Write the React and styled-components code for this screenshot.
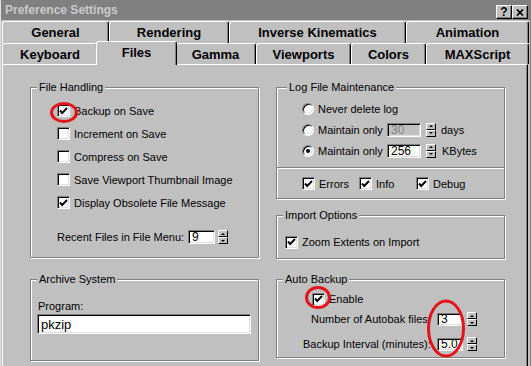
import React from 'react';
import styled, { createGlobalStyle } from 'styled-components';

const GlobalStyle = createGlobalStyle`
  html, body {
    margin: 0;
    padding: 0;
    background: #c0c0c0;
  }
  body {
    font-family: "Liberation Sans", Arial, sans-serif;
    font-size: 11px;
    color: #000;
  }
`;

const Window = styled.div`
  position: relative;
  width: 531px;
  height: 366px;
  background: #c0c0c0;
  overflow: hidden;
  display: flex;
  flex-direction: column;
  box-sizing: border-box;
  border-left: 1px solid #dfdfdf;
  border-right: 1px solid #808080;
`;

const TitleBar = styled.div`
  height: 20px;
  flex: none;
  background: #808080;
  display: flex;
  align-items: flex-end;
  justify-content: space-between;
  padding: 0 2px 1px 4px;
  box-sizing: border-box;
`;

const Title = styled.span`
  align-self: center;
  font-weight: bold;
  font-size: 12px;
  color: #cacaca;
`;

const CapButtons = styled.div`
  display: flex;
`;

const CapButton = styled.div`
  box-sizing: border-box;
  width: 16px;
  height: 14px;
  background: #c0c0c0;
  border: 1px solid;
  border-color: #fff #000 #000 #fff;
  box-shadow: inset -1px -1px #808080;
  display: flex;
  align-items: center;
  justify-content: center;
  font-weight: bold;
  font-size: 12px;
  line-height: 1;
`;

const TabRow = styled.div`
  display: flex;
  align-items: flex-end;
  height: ${(p) => p.$h}px;
  margin-top: ${(p) => p.$top || 0}px;
  padding-left: 1px;
  position: relative;
  z-index: ${(p) => p.$z || 0};
  flex: none;
`;

const Tab = styled.div`
  box-sizing: border-box;
  flex: none;
  width: ${(p) => p.$w + (p.$active ? 4 : 0)}px;
  height: ${(p) => (p.$active ? p.$h + 3 : p.$h)}px;
  margin: 0 ${(p) => (p.$active ? -2 : 0)}px ${(p) => (p.$active ? -1 : 0)}px;
  position: relative;
  z-index: ${(p) => (p.$active ? 2 : 0)};
  background: #c0c0c0;
  border-top: 1px solid #fff;
  border-left: 1px solid #fff;
  border-right: 1px solid #000;
  box-shadow: inset -1px 0 #808080;
  border-radius: 3px 3px 0 0;
  display: flex;
  align-items: center;
  justify-content: center;
  padding-bottom: ${(p) => (p.$active ? 3 : 0)}px;
  font-weight: bold;
  font-size: 13px;
`;

const Panel = styled.div`
  flex: 1;
  margin: 0 2px 0 1px;
  border-top: 1px solid #fff;
  border-left: 1px solid #fff;
  border-right: 1px solid #000;
  box-shadow: inset -1px 0 #808080;
  display: grid;
  grid-template-columns: 229px 229px;
  column-gap: 17px;
  align-items: start;
  padding: 22px 0 0 27px;
`;

const Column = styled.div`
  display: flex;
  flex-direction: column;
`;

const Group = styled.div`
  position: relative;
  box-sizing: border-box;
  height: ${(p) => p.$h}px;
  margin-top: ${(p) => p.$mt || 0}px;
  border: 1px solid #808080;
  box-shadow: inset 1px 1px #fff, 1px 1px #fff;
  display: flex;
  flex-direction: column;
  padding: ${(p) => p.$pad || '0'};
`;

const Caption = styled.span`
  position: absolute;
  top: -7px;
  left: ${(p) => p.$x || 5}px;
  padding: 0 2px;
  background: #c0c0c0;
  line-height: 13px;
`;

const Row = styled.div`
  display: flex;
  align-items: center;
  height: ${(p) => p.$h || 20}px;
  margin-top: ${(p) => p.$mt || 0}px;
  padding-left: ${(p) => p.$indent || 0}px;
  justify-content: ${(p) => (p.$spread ? 'space-between' : 'flex-start')};
  flex: none;
`;

const Item = styled.div`
  display: flex;
  align-items: center;
  width: ${(p) => (p.$w ? `${p.$w}px` : 'auto')};
`;

const Label = styled.span`
  white-space: nowrap;
  margin-left: ${(p) => p.$ml || 0}px;
  width: ${(p) => (p.$w ? `${p.$w}px` : 'auto')};
  flex: none;
`;

const Box = styled.span`
  box-sizing: border-box;
  width: 13px;
  height: 13px;
  flex: none;
  background: #fff;
  border: 1px solid;
  border-color: #808080 #fff #fff #808080;
  box-shadow: inset 1px 1px #000, inset -1px -1px #dfdfdf;
  display: flex;
  align-items: center;
  justify-content: center;
`;

const RadioDot = styled.span`
  box-sizing: border-box;
  width: 12px;
  height: 12px;
  flex: none;
  border-radius: 50%;
  background: #fff;
  border: 1px solid;
  border-color: #808080 #fff #fff #808080;
  box-shadow: inset 1px 1px #000, inset -1px -1px #dfdfdf;
  display: flex;
  align-items: center;
  justify-content: center;
  &::after {
    content: '';
    width: 4px;
    height: 4px;
    border-radius: 50%;
    background: ${(p) => (p.$on ? '#000' : 'transparent')};
  }
`;

const Field = styled.div`
  box-sizing: border-box;
  width: ${(p) => p.$w}px;
  height: ${(p) => p.$h || 14}px;
  flex: none;
  background: ${(p) => (p.$disabled ? '#c0c0c0' : '#fff')};
  color: ${(p) => (p.$disabled ? '#808080' : '#000')};
  border: 1px solid;
  border-color: #808080 #fff #fff #808080;
  box-shadow: inset 1px 1px #000, inset -1px -1px #dfdfdf;
  padding-left: 3px;
  display: flex;
  align-items: center;
  font-size: ${(p) => p.$fs || 12}px;
  margin-top: ${(p) => p.$mt || 0}px;
`;

const SpinBox = styled.div`
  display: flex;
  flex-direction: column;
  width: 10px;
  height: ${(p) => p.$h || 14}px;
  margin-left: ${(p) => p.$gap || 4}px;
  flex: none;
`;

const SpinHalf = styled.div`
  flex: 1;
  box-sizing: border-box;
  background: #c0c0c0;
  border: 1px solid;
  border-color: #fff #000 #000 #fff;
  display: flex;
  align-items: center;
  justify-content: center;
`;

const Arrow = styled.span`
  width: 0;
  height: 0;
  border-left: 2px solid transparent;
  border-right: 2px solid transparent;
  ${(p) => (p.$down ? 'border-top: 2px solid #000;' : 'border-bottom: 2px solid #000;')}
`;

const Separator = styled.div`
  height: 1px;
  margin-top: ${(p) => p.$mt || 0}px;
  background: #808080;
  border-bottom: 1px solid #fff;
  flex: none;
`;

const Fill = styled.div`
  flex: 1;
  display: flex;
  align-items: center;
  padding-left: ${(p) => p.$indent || 0}px;
`;

const Overlay = styled.svg`
  position: absolute;
  left: 0;
  top: 0;
  pointer-events: none;
`;

const Check = ({ on }) => (
  <Box>
    {on && (
      <svg width="9" height="8" viewBox="0 0 9 8">
        <polyline points="1,3.5 3.2,6 8,1" fill="none" stroke="#000" strokeWidth="1.9" />
      </svg>
    )}
  </Box>
);

const CheckItem = ({ on, text, w }) => (
  <Item $w={w}>
    <Check on={on} />
    <Label $ml={4}>{text}</Label>
  </Item>
);

const Spinner = ({ h, gap }) => (
  <SpinBox $h={h} $gap={gap}>
    <SpinHalf>
      <Arrow />
    </SpinHalf>
    <SpinHalf>
      <Arrow $down />
    </SpinHalf>
  </SpinBox>
);

const topTabs = [
  ['General', 107],
  ['Rendering', 120],
  ['Inverse Kinematics', 177],
  ['Animation', 123],
];

const bottomTabs = [
  ['Keyboard', 96],
  ['Files', 77],
  ['Gamma', 81],
  ['Viewports', 95],
  ['Colors', 75],
  ['MAXScript', 103],
];

const fileOptions = [
  ['Backup on Save', true],
  ['Increment on Save', false],
  ['Compress on Save', false],
  ['Save Viewport Thumbnail Image', false],
  ['Display Obsolete File Message', true],
];

export default function App() {
  return (
    <>
      <GlobalStyle />
      <Window>
        <TitleBar>
          <Title>Preference Settings</Title>
          <CapButtons>
            <CapButton>?</CapButton>
            <CapButton>
              <svg width="8" height="7" viewBox="0 0 8 7">
                <path d="M1 0.5 L7 6.5 M7 0.5 L1 6.5" stroke="#000" strokeWidth="1.7" />
              </svg>
            </CapButton>
          </CapButtons>
        </TitleBar>

        <TabRow $h={22} $top={1}>
          {topTabs.map(([name, w]) => (
            <Tab key={name} $w={w} $h={22}>
              {name}
            </Tab>
          ))}
        </TabRow>
        <TabRow $h={21} $z={2}>
          {bottomTabs.map(([name, w]) => (
            <Tab key={name} $w={w} $h={21} $active={name === 'Files'}>
              {name}
            </Tab>
          ))}
        </TabRow>

        <Panel>
          <Column>
            <Group $h={171} $pad="11px 0 0 26px">
              <Caption $x={6}>File Handling</Caption>
              {fileOptions.map(([text, on]) => (
                <Row key={text} $h={23}>
                  <CheckItem on={on} text={text} />
                </Row>
              ))}
              <Row $h={20} $mt={13}>
                <Label $w={131}>Recent Files in File Menu:</Label>
                <Field $w={27}>9</Field>
                <Spinner gap={3} />
              </Row>
            </Group>

            <Group $h={82} $mt={21} $pad="20px 0 0 6px">
              <Caption $x={6}>Archive System</Caption>
              <Label $ml={1}>Program:</Label>
              <Field $w={214} $h={20} $mt={2} $fs={13}>
                pkzip
              </Field>
            </Group>
          </Column>

          <Column>
            <Group $h={112} $pad="10px 0 0 0">
              <Caption $x={10}>Log File Maintenance</Caption>
              <Row $h={21} $indent={25}>
                <RadioDot />
                <Label $ml={4}>Never delete log</Label>
              </Row>
              <Row $h={21} $indent={25}>
                <RadioDot />
                <Label $ml={4} $w={69}>
                  Maintain only
                </Label>
                <Field $w={34} $disabled>
                  30
                </Field>
                <Spinner gap={5} />
                <Label $ml={5}>days</Label>
              </Row>
              <Row $h={21} $indent={25}>
                <RadioDot $on />
                <Label $ml={4} $w={69}>
                  Maintain only
                </Label>
                <Field $w={34}>256</Field>
                <Spinner gap={5} />
                <Label $ml={6}>KBytes</Label>
              </Row>
              <Separator $mt={6} />
              <Fill $indent={25}>
                <CheckItem on text="Errors" w={57} />
                <CheckItem on text="Info" w={57} />
                <CheckItem on text="Debug" w={57} />
              </Fill>
            </Group>

            <Group $h={44} $mt={16} $pad="16px 0 0 8px">
              <Caption $x={6}>Import Options</Caption>
              <Row $h={20}>
                <CheckItem on text="Zoom Extents on Import" />
              </Row>
            </Group>

            <Group $h={79} $mt={20} $pad="10px 27px 0 0">
              <Caption $x={6}>Auto Backup</Caption>
              <Row $h={18} $indent={35}>
                <CheckItem on text="Enable" />
              </Row>
              <Row $h={20} $mt={1} $indent={34} $spread>
                <Label>Number of Autobak files:</Label>
                <Item>
                  <Field $w={26} $h={13}>
                    3
                  </Field>
                  <Spinner h={14} gap={4} />
                </Item>
              </Row>
              <Row $h={20} $mt={5} $indent={26} $spread>
                <Label>Backup Interval (minutes):</Label>
                <Item>
                  <Field $w={26} $h={13}>
                    5.0
                  </Field>
                  <Spinner h={14} gap={4} />
                </Item>
              </Row>
            </Group>
          </Column>
        </Panel>

        <Overlay width="531" height="366" viewBox="0 0 531 366">
          <g fill="none" stroke="#e3141b" strokeWidth="3">
            <ellipse cx="63" cy="112.5" rx="12.5" ry="9" />
            <ellipse cx="317" cy="297.5" rx="11.5" ry="10" />
            <ellipse cx="445" cy="328.5" rx="17.5" ry="27.5" />
          </g>
        </Overlay>
      </Window>
    </>
  );
}
